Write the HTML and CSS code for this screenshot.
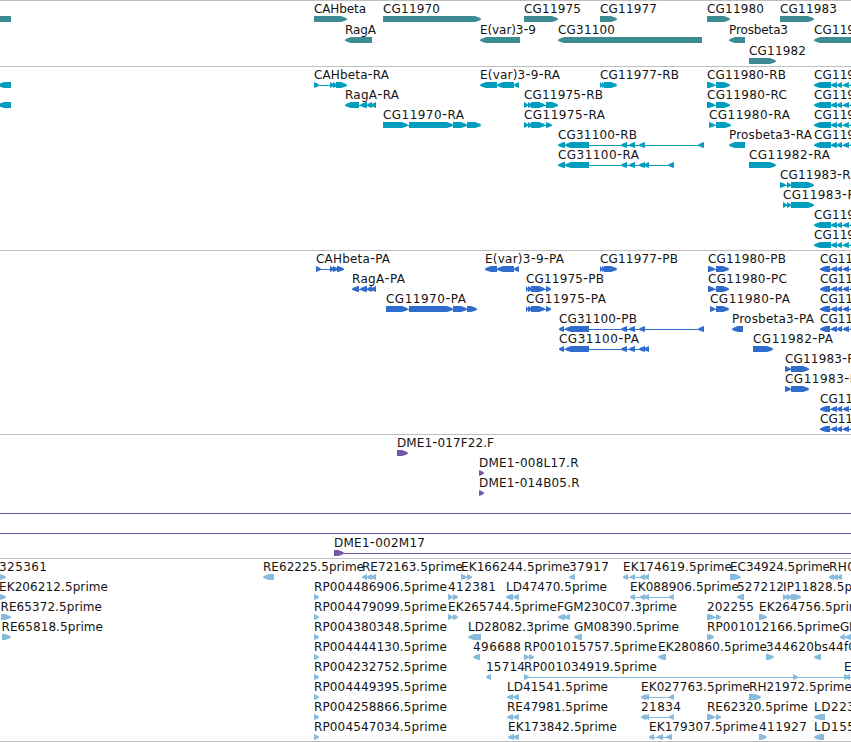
FILE: index.html
```html
<!DOCTYPE html>
<html lang="en">
<head>
    <meta charset="UTF-8">
    <meta name="viewport" content="width=device-width, initial-scale=1.0">
    <title>Genome tracks</title>
    <link rel="stylesheet" href="styles.css">
</head>
<body>
    <main class="tracks">
        <section class="track genes"><svg id="genes"></svg></section>
        <section class="track transcripts"><svg id="transcripts"></svg></section>
        <section class="track proteins"><svg id="proteins"></svg></section>
        <section class="track clones"><svg id="clones"></svg></section>
        <section class="track ests"><svg id="ests"></svg></section>
    </main>
    <script src="tracks.js"></script>
</body>
</html>
```

FILE: styles.css
```css
body {
    margin: 0;
    background: #ffffff;
    overflow: hidden;
}

.tracks {
    display: flex;
    flex-direction: column;
    width: 851px;
    border-bottom: 1px solid #bfbfbf;
}

.track {
    box-sizing: border-box;
    height: 184px;
    border-top: 1px solid #bfbfbf;
    overflow: hidden;
}

.track svg {
    display: block;
    width: 100%;
    height: 100%;
}

.track text {
    font-family: "DejaVu Sans", sans-serif;
    font-size: 12px;
    fill: #141414;
}

.track .dash {
    font-size: 14px;
}

.genes {
    height: 66px;
    color: #3d8c93;
}

.transcripts {
    color: #009dbf;
}

.proteins {
    color: #306ccb;
}

.clones {
    height: 124px;
    color: #7557a5;
}

.ests {
    height: 183px;
    color: #86bbdd;
}

.segment {
    fill: currentColor;
}

.backbone {
    fill: currentColor;
}
```

FILE: tracks.js
```js
// feature: [row, label, label start, label end, strand, [[start, end], ...]]
const genes = [
    [0, '', 0, 0, 0, [[0, 11]]],
    [0, 'CAHbeta', 314, 366, 1, [[314, 347]]],
    [0, 'CG11970', 383, 440, 1, [[383, 481]]],
    [0, 'CG11975', 524, 581, 1, [[524, 558]]],
    [0, 'CG11977', 600, 657, 1, [[600, 617]]],
    [0, 'CG11980', 707, 764, 1, [[707, 730]]],
    [0, 'CG11983', 780, 837, 1, [[780, 814]]],
    [1, 'RagA', 345, 376, -1, [[345, 372]]],
    [1, 'E(var)3-9', 480, 536, -1, [[480, 520]]],
    [1, 'CG31100', 558, 615, -1, [[558, 702]]],
    [1, 'Prosbeta3', 729, 788, -1, [[729, 745]]],
    [1, 'CG119', 814, 855, -1, [[814, 870]]],
    [2, 'CG11982', 749, 806, 1, [[749, 776]]]
];

const rightRna = [[814, 831], [831, 837], [837, 842], [843, 849], [850, 856]];
const transcripts = [
    [0, '', 0, 0, -1, [[-2, 11]]],
    [1, '', 0, 0, -1, [[-2, 11]]],
    [0, 'CAHbeta-RA', 314, 389, 1, [[314, 319], [330, 334], [333, 337], [336, 347]]],
    [0, 'E(var)3-9-RA', 480, 560, -1, [[480, 497], [497, 514], [514, 519]]],
    [0, 'CG11977-RB', 600, 679, 1, [[600, 602], [602, 605], [604, 617]]],
    [0, 'CG11980-RB', 707, 786, 1, [[707, 715], [716, 730]]],
    [0, 'CG119', 814, 855, -1, rightRna],
    [1, 'RagA-RA', 345, 399, -1, [[345, 359], [360, 367], [367, 372], [371, 376]]],
    [1, 'CG11975-RB', 524, 603, 1, [[524, 528], [528, 532], [531, 545], [546, 558]]],
    [1, 'CG11980-RC', 707, 787, 1, [[707, 715], [716, 730]]],
    [1, 'CG119', 814, 855, -1, rightRna],
    [2, 'CG11970-RA', 383, 464, 1, [[383, 408], [409, 453], [453, 467], [467, 481]]],
    [2, 'CG11975-RA', 524, 605, 1, [[524, 528], [528, 532], [531, 545], [546, 552]]],
    [2, 'CG11980-RA', 709, 790, 1, [[709, 715], [716, 731]]],
    [2, 'CG119', 814, 855, -1, rightRna],
    [3, 'CG31100-RB', 558, 637, -1, [[558, 565], [565, 589], [621, 627], [629, 635], [639, 645], [698, 704]]],
    [3, 'Prosbeta3-RA', 729, 812, -1, [[729, 745]]],
    [3, 'CG119', 814, 855, -1, rightRna],
    [4, 'CG31100-RA', 558, 639, -1, [[558, 565], [565, 589], [621, 627], [629, 635], [639, 645], [644, 649], [668, 674]]],
    [4, 'CG11982-RA', 749, 830, 1, [[749, 776]]],
    [5, 'CG11983-RB', 780, 859, 1, [[780, 786], [787, 791], [791, 814]]],
    [6, 'CG11983-RA', 783, 864, 1, [[783, 787], [787, 791], [791, 814]]],
    [7, 'CG119', 814, 855, -1, rightRna],
    [8, 'CG119', 814, 855, -1, rightRna]
];

const rightPep = [[820, 830], [831, 837], [837, 842], [843, 849], [850, 856]];
const proteins = [
    [0, 'CAHbeta-PA', 316, 390, 1, [[316, 321], [330, 334], [333, 338], [337, 344]]],
    [0, 'E(var)3-9-PA', 485, 564, -1, [[485, 497], [497, 514], [514, 519]]],
    [0, 'CG11977-PB', 600, 678, 1, [[600, 602], [602, 605], [604, 617]]],
    [0, 'CG11980-PB', 708, 786, 1, [[708, 715], [716, 729]]],
    [0, 'CG11', 820, 853, -1, rightPep],
    [1, 'RagA-PA', 352, 405, -1, [[352, 359], [360, 367], [367, 372], [371, 376]]],
    [1, 'CG11975-PB', 526, 604, 1, [[526, 528], [528, 532], [531, 545], [546, 551]]],
    [1, 'CG11980-PC', 708, 787, 1, [[708, 715], [716, 729]]],
    [1, 'CG11', 820, 853, -1, rightPep],
    [2, 'CG11970-PA', 386, 466, 1, [[386, 408], [409, 453], [453, 467], [467, 477]]],
    [2, 'CG11975-PA', 526, 606, 1, [[526, 528], [528, 532], [531, 545], [546, 551]]],
    [2, 'CG11980-PA', 710, 790, 1, [[710, 715], [716, 729]]],
    [2, 'CG11', 820, 853, -1, rightPep],
    [3, 'CG31100-PB', 559, 637, -1, [[559, 564], [565, 589], [621, 627], [629, 635], [639, 645], [698, 704]]],
    [3, 'Prosbeta3-PA', 732, 814, -1, [[732, 743]]],
    [3, 'CG11', 820, 853, -1, rightPep],
    [4, 'CG31100-PA', 559, 639, -1, [[559, 564], [565, 589], [621, 627], [629, 635], [639, 645], [644, 649]]],
    [4, 'CG11982-PA', 753, 833, 1, [[753, 773]]],
    [5, 'CG11983-PB', 785, 863, 1, [[785, 791], [791, 809]]],
    [6, 'CG11983-PA', 785, 865, 1, [[785, 791], [791, 809]]],
    [7, 'CG11', 820, 853, -1, rightPep],
    [8, 'CG11', 820, 853, -1, rightPep]
];

const clones = [
    [0, 'DME1-017F22.F', 397, 494, 1, [[397, 408]]],
    [1, 'DME1-008L17.R', 479, 578.5, 1, [[479, 484]]],
    [2, 'DME1-014B05.R', 479, 579.5, 1, [[479, 484]]],
    [3, '', 0, 0, 1, [[-20, -10], [870, 880]]],
    [4, '', 0, 0, 1, [[-20, -10], [870, 880]]],
    [5, 'DME1-002M17', 334, 425, 1, [[334, 344], [870, 880]]]
];

const ests = [
    [0, '325361', -1, 47, 1, [[-2, 6]]],
    [0, 'RE62225.5prime', 263, 364, -1, [[263, 274]]],
    [0, 'RE72163.5prime', 362, 463, -1, [[362, 367], [367, 372], [371, 376]]],
    [0, 'EK166244.5prime', 461, 570, 1, [[461, 467], [467, 472]]],
    [0, '37917', 569, 609, -1, [[569, 575]]],
    [0, 'EK174619.5prime', 623, 732, -1, [[623, 628], [630, 635], [640, 645], [644, 649]]],
    [0, 'EC34924.5prime', 730, 830, 1, [[730, 741]]],
    [0, 'RH0', 829, 855, -1, [[829, 834], [833, 838], [837, 842]]],

    [1, 'EK206212.5prime', -1, 108, 1, [[-2, 6]]],
    [1, 'RP004486906.5prime', 314, 447, 1, [[314, 319]]],
    [1, '412381', 448, 496, 1, [[448, 453], [453, 458]]],
    [1, 'LD47470.5prime', 506, 607, -1, [[506, 513], [513, 519]]],
    [1, 'EK088906.5prime', 630, 739, -1, [[630, 635], [640, 645], [644, 649], [669, 674]]],
    [1, '527212', 737, 784, -1, [[737, 744]]],
    [1, 'IP11828.5prime', 783, 880, 1, [[783, 788], [787, 792], [791, 801]]],

    [2, 'RE65372.5prime', 0.5, 102, 1, [[1, 11]]],
    [2, 'RP004479099.5prime', 314, 447, 1, [[314, 319]]],
    [2, 'EK265744.5prime', 448, 557, 1, [[448, 453], [453, 458]]],
    [2, 'FGM230C07.3prime', 557, 677, -1, [[558, 565], [564, 570]]],
    [2, '202255', 707, 754, 1, [[707, 715], [716, 721]]],
    [2, 'EK264756.5prime', 759, 868, 1, [[759, 767]]],

    [3, 'RE65818.5prime', 1.5, 103, 1, [[2, 11]]],
    [3, 'RP004380348.5prime', 314, 447, 1, [[314, 319]]],
    [3, 'LD28082.3prime', 468, 569, -1, [[468, 481]]],
    [3, 'GM08390.5prime', 574, 679, -1, [[574, 582]]],
    [3, 'RP001012166.5prime', 707, 840, 1, [[707, 712], [709, 714]]],
    [3, 'GH', 840, 858, -1, [[840, 845], [845, 851]]],

    [4, 'RP004444130.5prime', 314, 447, 1, [[314, 319]]],
    [4, '496688', 473, 521, -1, [[473, 480]]],
    [4, 'RP001015757.5prime', 524, 657, 1, [[524, 529], [529, 534]]],
    [4, 'EK280860.5prime', 658, 767, -1, [[658, 666]]],
    [4, '344620', 766, 814, 1, [[766, 774]]],
    [4, 'bs44f0', 814, 856, -1, [[814, 821]]],

    [5, 'RP004232752.5prime', 314, 447, 1, [[314, 319]]],
    [5, '15714', 486, 525, -1, [[486, 491]]],
    [5, 'RP001034919.5prime', 524, 657, 1, [[524, 529], [793, 798], [844, 849]]],
    [5, 'E', 844, 852, -1, [[845, 850], [870, 880]]],

    [6, 'RP004449395.5prime', 314, 447, 1, [[314, 319]]],
    [6, 'LD41541.5prime', 507, 608, -1, [[507, 513], [513, 519]]],
    [6, 'EK027763.5prime', 641, 750, -1, [[641, 646], [644, 649], [669, 674]]],
    [6, 'RH21972.5prime', 749, 852, 1, [[749, 761]]],

    [7, 'RP004258866.5prime', 314, 447, 1, [[314, 319]]],
    [7, 'RE47981.5prime', 507, 608, -1, [[507, 513], [513, 519]]],
    [7, '21834', 641, 681, -1, [[641, 646], [644, 649], [669, 674]]],
    [7, 'RE62320.5prime', 707, 808, 1, [[707, 715], [716, 721]]],
    [7, 'LD223', 814, 855, -1, [[814, 825]]],

    [8, 'RP004547034.5prime', 314, 447, 1, [[314, 319]]],
    [8, 'EK173842.5prime', 508, 617, -1, [[508, 514], [513, 519]]],
    [8, 'EK179307.5prime', 649, 758, -1, [[649, 654], [657, 663], [666, 672]]],
    [8, '411927', 759, 807, 1, [[759, 767]]],
    [8, 'LD155', 814, 855, -1, [[814, 824]]]
];

function add(parent, tag, attrs) {
    const el = document.createElementNS('http://www.w3.org/2000/svg', tag);
    for (const key in attrs) {
        el.setAttribute(key, attrs[key]);
    }
    parent.appendChild(el);
    return el;
}

// a bar 6px high with a pointed end in the direction of the strand
function segmentPoints(start, end, y, strand) {
    if (strand === 0) {
        return `${start},${y} ${end},${y} ${end},${y + 6} ${start},${y + 6}`;
    }
    const head = Math.min(6, end - start);
    const tip = strand === 1 ? end : start;
    const tail = strand === 1 ? start : end;
    const neck = tip - strand * head;
    const mid = tip - strand * head * 0.45;
    return [
        [tail, y], [neck, y], [mid, y + 1.2], [tip, y + 2.8],
        [tip, y + 3.8], [mid, y + 5], [neck, y + 6], [tail, y + 6]
    ].map(p => p.join(',')).join(' ');
}

function drawLabel(svg, label, x, y, width) {
    const text = add(svg, 'text', { x: x, y: y, textLength: width });
    label.split(/(-)/).forEach(part => {
        const span = add(text, 'tspan', part === '-' ? { class: 'dash' } : {});
        span.textContent = part;
    });
}

function drawTrack(id, features, pitch) {
    const svg = document.getElementById(id);
    features.forEach(([row, label, x, labelEnd, strand, segments]) => {
        const y = row * pitch + 15;
        const first = segments[0][0];
        const last = segments[segments.length - 1][1];

        if (segments.length > 1) {
            add(svg, 'rect', { class: 'backbone', x: first, y: y + 3, width: last - first, height: 1 });
        }
        segments.forEach(([start, end]) => {
            add(svg, 'polygon', { class: 'segment', points: segmentPoints(start, end, y, strand) });
        });
        if (label) {
            drawLabel(svg, label, x, y - 3, labelEnd - x);
        }
    });
}

drawTrack('genes', genes, 21);
drawTrack('transcripts', transcripts, 20);
drawTrack('proteins', proteins, 20);
drawTrack('clones', clones, 20);
drawTrack('ests', ests, 20);
```
